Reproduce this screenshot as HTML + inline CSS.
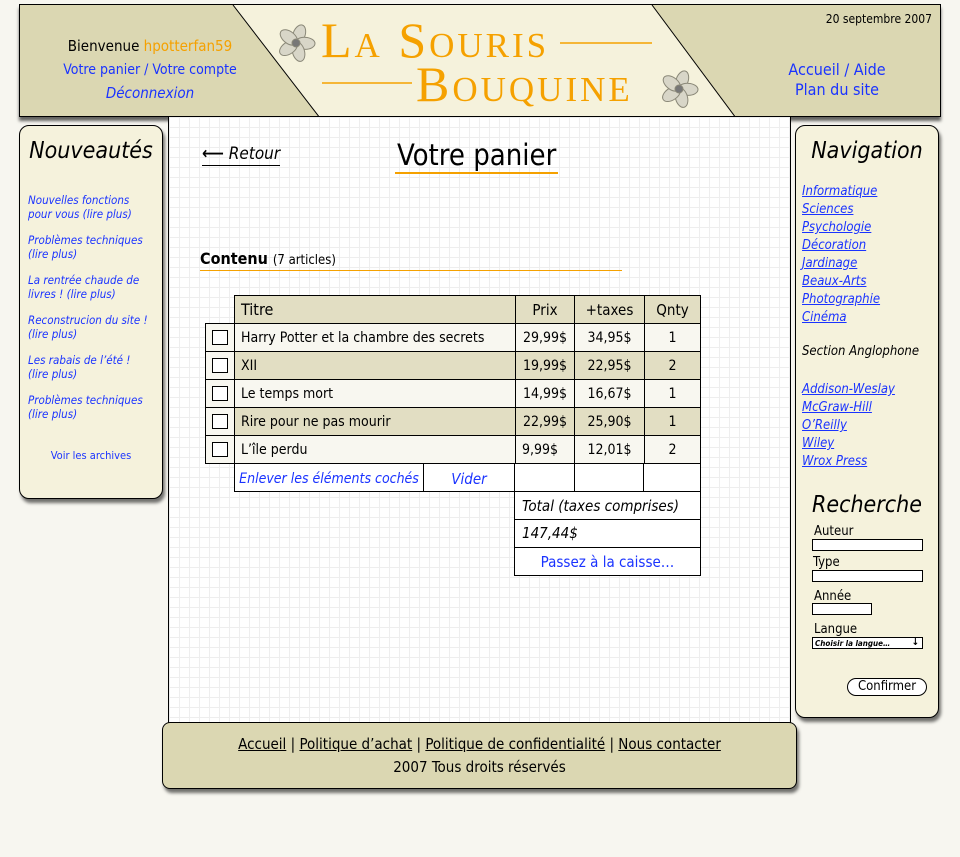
<!DOCTYPE html>
<html><head><meta charset="utf-8">
<style>
*{margin:0;padding:0;box-sizing:border-box}
body{width:960px;height:857px;background:#f7f6f0;position:relative;overflow:hidden;font-family:"DejaVu Sans Condensed","Liberation Sans",sans-serif;color:#000}
.abs{position:absolute}
.blue{color:#1a33ff}
.grid{background-color:#fff;background-image:linear-gradient(#eee 1px,transparent 1px),linear-gradient(90deg,#eee 1px,transparent 1px);background-size:10px 10px}
.box{position:absolute;border:1px solid #000;border-radius:10px;background:#f5f2dc;box-shadow:2px 4px 3px rgba(0,0,0,.55)}
table{border-collapse:collapse}
td{border:1px solid #000;height:28px;font-size:14px;padding:0 6px}
.nav a{display:block;color:#1a33ff;font-style:italic;font-size:13px;line-height:18px;text-decoration:underline}
.lab{font-size:13px;position:absolute}
.inp{position:absolute;border:1px solid #000;background:#fff;height:12px}
.logo{position:absolute;font-family:'Liberation Serif',serif;color:#f5a100;font-size:50px;font-variant:small-caps;line-height:50px;letter-spacing:3px;white-space:nowrap}
.d td{background:#e2dec3}
.l td{background:#f8f7f0}
</style></head><body>
<div class="abs" style="left:19px;top:4px;width:922px;height:113px;border:1px solid #000;background:#f5f2dc;box-shadow:0 4px 3px rgba(0,0,0,.6);overflow:hidden">
<svg class="abs" style="left:0;top:0" width="922" height="113">
<polygon points="0,0 213,0 300,113 0,113" fill="#dbd7b2"/>
<line x1="213" y1="0" x2="300" y2="113" stroke="#000"/>
<polygon points="632,0 922,0 922,113 716,113" fill="#dbd7b2"/>
<line x1="632" y1="0" x2="716" y2="113" stroke="#000"/>
<line x1="540" y1="38" x2="632" y2="38" stroke="#f5a100" stroke-width="1.5"/>
<line x1="302" y1="78" x2="392" y2="78" stroke="#f5a100" stroke-width="1.5"/>
<g transform="translate(276,38)" fill="#d8d6c8" stroke="#8a8878" stroke-width="1">
<ellipse cx="0" cy="-9" rx="6" ry="10" transform="rotate(20)"/><ellipse cx="0" cy="-9" rx="6" ry="10" transform="rotate(92)"/><ellipse cx="0" cy="-9" rx="6" ry="10" transform="rotate(164)"/><ellipse cx="0" cy="-9" rx="6" ry="10" transform="rotate(236)"/><ellipse cx="0" cy="-9" rx="6" ry="10" transform="rotate(308)"/><circle r="4" fill="#777"/></g>
<g transform="translate(659,84)" fill="#d8d6c8" stroke="#8a8878" stroke-width="1">
<ellipse cx="0" cy="-9" rx="6" ry="10" transform="rotate(20)"/><ellipse cx="0" cy="-9" rx="6" ry="10" transform="rotate(92)"/><ellipse cx="0" cy="-9" rx="6" ry="10" transform="rotate(164)"/><ellipse cx="0" cy="-9" rx="6" ry="10" transform="rotate(236)"/><ellipse cx="0" cy="-9" rx="6" ry="10" transform="rotate(308)"/><circle r="4" fill="#777"/></g>
</svg>
<div class="logo" style="left:301px;top:10px">La Souris</div>
<div class="logo" style="left:396px;top:54px">Bouquine</div>
<div class="abs" style="left:0;width:260px;top:32px;text-align:center;font-size:15px">Bienvenue <span style="color:#f5a100">hpotterfan59</span></div>
<div class="abs blue" style="left:0;width:260px;top:57px;text-align:center;font-size:14px">Votre panier / Votre compte</div>
<div class="abs blue" style="left:0;width:260px;top:79px;text-align:center;font-size:15px;font-style:italic">Déconnexion</div>
<div class="abs" style="right:8px;top:7px;font-size:12px">20 septembre 2007</div>
<div class="abs blue" style="left:727px;width:180px;top:55px;text-align:center;font-size:16px;line-height:20px">Accueil / Aide<br>Plan du site</div>
</div>
<div class="abs grid" style="left:168px;top:117px;width:623px;height:610px;border-left:1px solid #000;border-right:1px solid #000"></div>
<div class="abs" style="left:202px;top:144px;font-size:17px;font-style:italic;border-bottom:1px solid #000;line-height:21px"><b style="font-style:normal">⟵</b> Retour</div>
<div class="abs" style="left:395px;top:138px;font-size:29px;line-height:34px;border-bottom:2px solid #f5a100;padding:0 2px">Votre panier</div>
<div class="abs" style="left:200px;top:248px;width:422px;font-size:16px;font-weight:bold;line-height:21px">Contenu <span style="font-size:13px;font-weight:normal">(7 articles)</span></div>
<div class="abs" style="left:200px;top:270px;width:422px;height:1px;background:#f5a100"></div>
<table class="abs" style="left:205px;top:295px">
<tr class="d"><td style="border:none;border-right:1px solid #000;background:transparent;width:29px"></td><td style="width:281px;font-size:16px">Titre</td><td style="width:59px;text-align:center;font-size:15px">Prix</td><td style="width:70px;text-align:center;font-size:15px">+taxes</td><td style="width:56px;text-align:center;font-size:15px">Qnty</td></tr>
<tr class="l"><td><div style="width:16px;height:15px;border:1px solid #000;background:#fff"></div></td><td>Harry Potter et la chambre des secrets</td><td style="text-align:center">29,99$</td><td style="text-align:center">34,95$</td><td style="text-align:center">1</td></tr>
<tr class="d"><td style="background:#f8f7f0"><div style="width:16px;height:15px;border:1px solid #000;background:#fff"></div></td><td>XII</td><td style="text-align:center">19,99$</td><td style="text-align:center">22,95$</td><td style="text-align:center">2</td></tr>
<tr class="l"><td><div style="width:16px;height:15px;border:1px solid #000;background:#fff"></div></td><td>Le temps mort</td><td style="text-align:center">14,99$</td><td style="text-align:center">16,67$</td><td style="text-align:center">1</td></tr>
<tr class="d"><td style="background:#f8f7f0"><div style="width:16px;height:15px;border:1px solid #000;background:#fff"></div></td><td>Rire pour ne pas mourir</td><td style="text-align:center">22,99$</td><td style="text-align:center">25,90$</td><td style="text-align:center">1</td></tr>
<tr class="l"><td><div style="width:16px;height:15px;border:1px solid #000;background:#fff"></div></td><td>L’île perdu</td><td style="text-align:left">9,99$</td><td style="text-align:center">12,01$</td><td style="text-align:center">2</td></tr>
</table>
<div class="abs" style="left:234px;top:463px;width:467px;height:29px;background:#fff;border:1px solid #000">
<div class="abs blue" style="left:0;top:0;width:189px;height:27px;border-right:1px solid #000;font-style:italic;font-size:14px;line-height:30px;text-align:center">Enlever les éléments cochés</div>
<div class="abs blue" style="left:189px;top:0;width:91px;height:27px;border-right:1px solid #000;font-style:italic;font-size:15px;line-height:30px;text-align:center">Vider</div>
<div class="abs" style="left:339px;top:0;width:70px;height:27px;border-left:1px solid #000;border-right:1px solid #000"></div>
</div>
<div class="abs" style="left:514px;top:491px;width:187px;height:85px;background:#fff;border:1px solid #000">
<div style="height:28px;border-bottom:1px solid #000;font-style:italic;font-size:15px;line-height:28px;padding-left:7px">Total (taxes comprises)</div>
<div style="height:28px;border-bottom:1px solid #000;font-style:italic;font-size:15px;line-height:27px;padding-left:7px">147,44$</div>
<div class="blue" style="font-size:15px;line-height:28px;text-align:center">Passez à la caisse…</div>
</div>
<div class="box" style="left:19px;top:125px;width:144px;height:374px">
<div style="text-align:center;font-style:italic;font-size:23px;margin-top:12px">Nouveautés</div>
<div class="blue" style="position:absolute;left:8px;top:67px;font-style:italic;font-size:11.5px;line-height:14px">
<div style="margin-bottom:12px">Nouvelles fonctions<br>pour vous (lire plus)</div>
<div style="margin-bottom:12px">Problèmes techniques<br>(lire plus)</div>
<div style="margin-bottom:12px">La rentrée chaude de<br>livres ! (lire plus)</div>
<div style="margin-bottom:12px">Reconstrucion du site !<br>(lire plus)</div>
<div style="margin-bottom:12px">Les rabais de l’été !<br>(lire plus)</div>
<div>Problèmes techniques<br>(lire plus)</div>
</div>
<div class="abs blue" style="left:0;width:142px;top:323px;text-align:center;font-size:11px">Voir les archives</div>
</div>
<div class="box" style="left:795px;top:125px;width:144px;height:593px">
<div style="text-align:center;font-style:italic;font-size:23px;margin-top:12px">Navigation</div>
<div class="nav abs" style="left:6px;top:57px">
<a>Informatique</a><a>Sciences</a><a>Psychologie</a><a>Décoration</a><a>Jardinage</a><a>Beaux-Arts</a><a>Photographie</a><a>Cinéma</a>
</div>
<div class="abs" style="left:6px;top:218px;font-style:italic;font-size:13px">Section Anglophone</div>
<div class="nav abs" style="left:6px;top:255px"><a>Addison-Weslay</a><a>McGraw-Hill</a><a>O’Reilly</a><a>Wiley</a><a>Wrox Press</a></div>
<div class="abs" style="left:0;width:142px;top:366px;text-align:center;font-style:italic;font-size:23px">Recherche</div>
<div class="lab" style="left:18px;top:398px">Auteur</div><div class="inp" style="left:16px;top:413px;width:111px"></div>
<div class="lab" style="left:17px;top:429px">Type</div><div class="inp" style="left:16px;top:444px;width:111px"></div>
<div class="lab" style="left:18px;top:463px">Année</div><div class="inp" style="left:16px;top:477px;width:60px"></div>
<div class="lab" style="left:18px;top:496px">Langue</div><div class="inp" style="left:16px;top:511px;width:111px;font-size:8px;font-style:italic;font-weight:bold;line-height:11px;padding-left:2px">Choisir la langue…<span style="position:absolute;right:3px;top:-1px;font-size:10px;font-style:normal">↓</span></div>
<div class="abs" style="left:51px;top:552px;width:80px;height:18px;border:1px solid #000;border-radius:9px;background:#fff;text-align:center;font-size:13px;line-height:16px">Confirmer</div>
</div>
<div class="box" style="left:162px;top:722px;width:635px;height:67px;background:#dbd7b2;border-radius:8px">
<div style="text-align:center;font-size:15px;margin-top:12px"><u>Accueil</u> | <u>Politique d’achat</u> | <u>Politique de confidentialité</u> | <u>Nous contacter</u></div>
<div style="text-align:center;font-size:15px;margin-top:5px">2007 Tous droits réservés</div>
</div>
</body></html>
